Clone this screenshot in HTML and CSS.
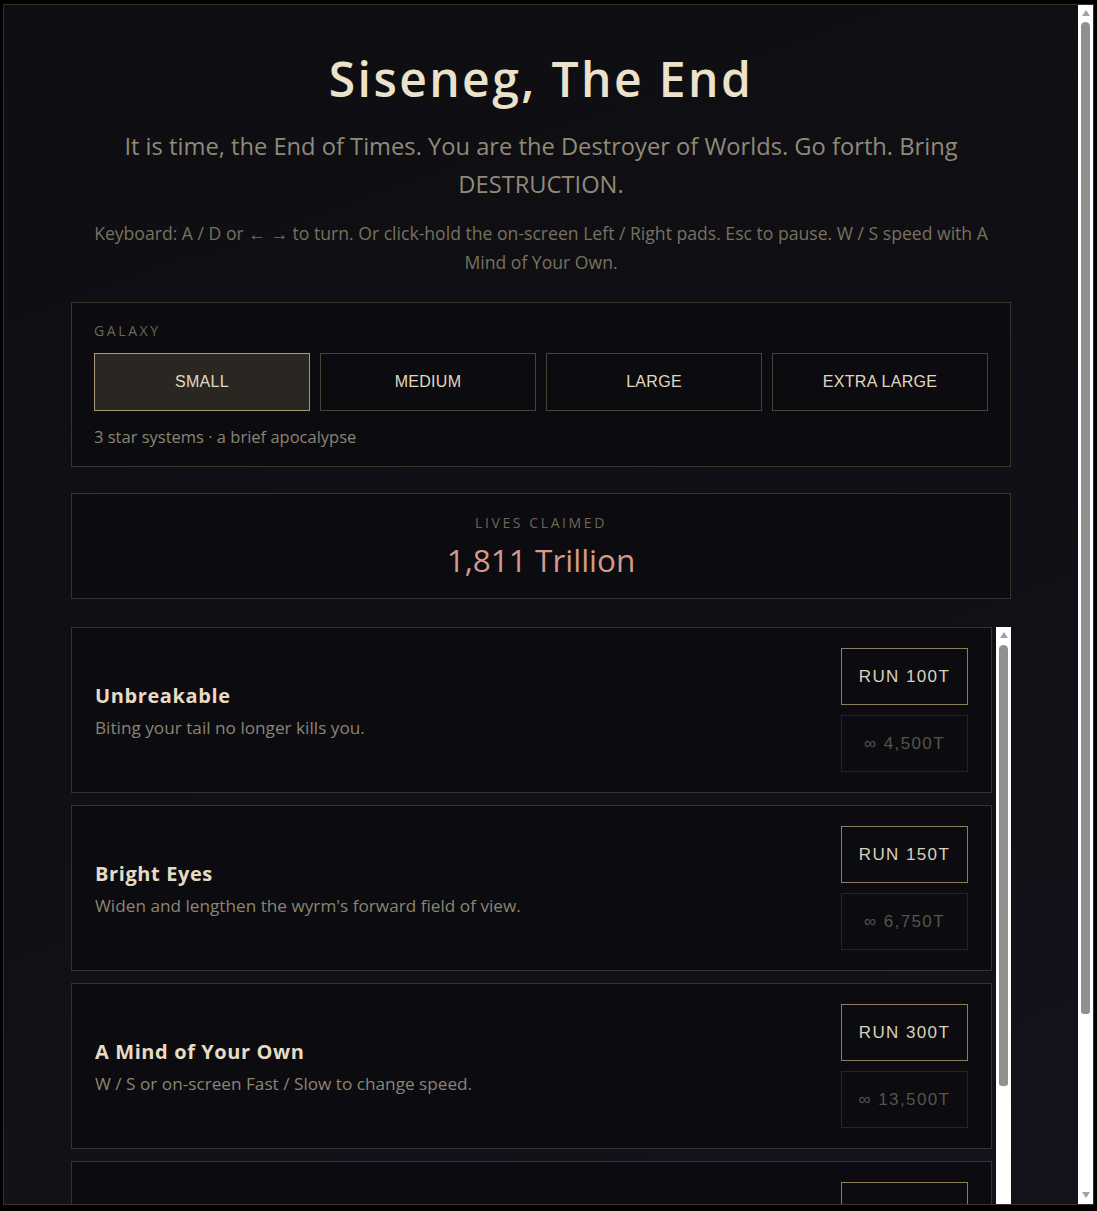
FILE: index.html
```html
<!DOCTYPE html>
<html>
<head>
    <title>Siseneg, The End</title>
    <link rel="stylesheet" href="styles.css">
</head>
<body>
    <div class="frame">
        <div class="viewport">
            <div class="page">
                <h1 class="title">Siseneg, The End</h1>
                <p class="tagline">It is time, the End of Times. You are the Destroyer of Worlds. Go forth. Bring DESTRUCTION.</p>
                <p class="hint">Keyboard: A / D or ← → to turn. Or click-hold the on-screen Left / Right pads. Esc to pause. W / S speed with A Mind of Your Own.</p>

                <section class="panel galaxy">
                    <div class="label">Galaxy</div>
                    <div class="sizes">
                        <button class="size active">SMALL</button>
                        <button class="size">MEDIUM</button>
                        <button class="size">LARGE</button>
                        <button class="size">EXTRA LARGE</button>
                    </div>
                    <div class="size-note">3 star systems · a brief apocalypse</div>
                </section>

                <section class="panel lives">
                    <div class="label">Lives Claimed</div>
                    <div class="lives-count">1,811 Trillion</div>
                </section>

                <div class="upgrades">
                    <div class="upgrade-list">
                        <div class="upgrade">
                            <div class="upgrade-text">
                                <h3>Unbreakable</h3>
                                <p>Biting your tail no longer kills you.</p>
                            </div>
                            <div class="upgrade-actions">
                                <button class="run">RUN 100T</button>
                                <button class="forever" disabled>∞ 4,500T</button>
                            </div>
                        </div>
                        <div class="upgrade">
                            <div class="upgrade-text">
                                <h3>Bright Eyes</h3>
                                <p>Widen and lengthen the wyrm's forward field of view.</p>
                            </div>
                            <div class="upgrade-actions">
                                <button class="run">RUN 150T</button>
                                <button class="forever" disabled>∞ 6,750T</button>
                            </div>
                        </div>
                        <div class="upgrade">
                            <div class="upgrade-text">
                                <h3>A Mind of Your Own</h3>
                                <p>W / S or on-screen Fast / Slow to change speed.</p>
                            </div>
                            <div class="upgrade-actions">
                                <button class="run">RUN 300T</button>
                                <button class="forever" disabled>∞ 13,500T</button>
                            </div>
                        </div>
                        <div class="upgrade">
                            <div class="upgrade-text">
                                <h3>Devourer</h3>
                                <p>Each world consumed feeds the wyrm twice over.</p>
                            </div>
                            <div class="upgrade-actions">
                                <button class="run">RUN 500T</button>
                                <button class="forever" disabled>∞ 22,500T</button>
                            </div>
                        </div>
                    </div>
                    <div class="scrollbar small">
                        <span class="arrow up"></span>
                        <span class="thumb"></span>
                        <span class="fill"></span>
                        <span class="arrow down"></span>
                    </div>
                </div>
            </div>
        </div>
        <div class="scrollbar page-bar">
            <span class="arrow up"></span>
            <span class="thumb"></span>
            <span class="fill"></span>
            <span class="arrow down"></span>
        </div>
    </div>
</body>
</html>
```

FILE: styles.css
```css
html, body {
    margin: 0;
    background-color: #000;
}

.frame {
    box-sizing: border-box;
    display: flex;
    margin: 4px 3px 0 3px;
    width: 1091px;
    height: 1201px;
    border: 1px solid #353224;
    overflow: hidden;
    background: linear-gradient(160deg, #0e0d11 0%, #111016 60%, #14131c 100%);
    font-family: "Open Sans", "Noto Sans", sans-serif;
}

.viewport {
    flex: 1;
    overflow: hidden;
}

/* drawn scrollbars */
.scrollbar {
    flex-shrink: 0;
    display: flex;
    flex-direction: column;
    align-items: center;
    width: 15px;
    background-color: #fff;
}

.arrow {
    width: 0;
    height: 0;
    border-left: 4.5px solid transparent;
    border-right: 4.5px solid transparent;
}

.arrow.up {
    margin-top: 5px;
    border-bottom: 6px solid #a3a3a3;
}

.arrow.down {
    margin-bottom: 6px;
    border-top: 6px solid #a3a3a3;
}

.thumb {
    width: 9px;
    border-radius: 4.5px 4.5px 3px 3px;
    background-color: #909090;
}

.fill {
    flex: 1;
}

.page-bar .thumb {
    margin-top: 6px;
    height: 992px;
}

.small .thumb {
    margin-top: 7px;
    height: 441px;
}

.page {
    max-width: 940px;
    margin: 0 auto;
    padding: 38px 0 60px;
}

.title {
    margin: 0;
    text-align: center;
    font-size: 48px;
    font-weight: 600;
    letter-spacing: 2.4px;
    line-height: 72px;
    color: #ebe2cb;
}

.tagline {
    margin: 12px 30px 0;
    text-align: center;
    font-size: 23.7px;
    line-height: 38px;
    color: #8f8a78;
}

.hint {
    margin: 16px 0 0;
    text-align: center;
    font-size: 17.6px;
    line-height: 29px;
    color: #77725f;
}

.panel {
    border: 1px solid #37332a;
    background-color: #0c0b0f;
}

.label {
    font-size: 14px;
    letter-spacing: 2.6px;
    text-transform: uppercase;
    color: #6a665a;
}

.galaxy {
    margin-top: 25px;
    padding: 18px 22px 18px;
}

.sizes {
    display: grid;
    grid-template-columns: repeat(4, 1fr);
    gap: 10px;
    margin-top: 13px;
}

.size {
    height: 58px;
    border: 1px solid #48443a;
    background-color: transparent;
    color: #e0d8c1;
    font-family: "Liberation Sans", Arial, sans-serif;
    font-size: 16px;
    letter-spacing: 0.3px;
    cursor: pointer;
}

.size.active {
    border-color: #a89a76;
    background-color: #2a2722;
}

.size-note {
    margin-top: 14px;
    font-size: 16.5px;
    color: #8a8574;
}

.lives {
    margin-top: 26px;
    padding: 19px 0 16px;
    text-align: center;
}

.lives-count {
    margin-top: 6px;
    font-size: 31.5px;
    line-height: 44px;
    color: #d4998a;
}

.upgrades {
    display: flex;
    margin-top: 28px;
    height: 760px;
    overflow: hidden;
}

.upgrade-list {
    flex: 1;
    display: flex;
    flex-direction: column;
    gap: 12px;
    padding-right: 4px;
}

.upgrade {
    flex-shrink: 0;
    display: flex;
    align-items: center;
    justify-content: space-between;
    padding: 20px 23px;
    border: 1px solid #37332a;
    background-color: #0c0b0f;
}

.upgrade h3 {
    margin: 0;
    font-size: 20px;
    font-weight: 700;
    letter-spacing: 0.6px;
    color: #e6dcc6;
}

.upgrade p {
    margin: 7px 0 0;
    font-size: 17.2px;
    color: #8a8574;
}

.upgrade-actions {
    display: flex;
    flex-direction: column;
    gap: 10px;
}

.upgrade-actions button {
    width: 127px;
    height: 57px;
    background-color: #0c0b0f;
    font-family: "Liberation Sans", Arial, sans-serif;
    font-size: 17px;
    letter-spacing: 1.4px;
}

.run {
    border: 1px solid #8c7f60;
    color: #dad2ba;
    cursor: pointer;
}

.forever {
    border: 1px solid #27251f;
    color: #57544a;
}
```
